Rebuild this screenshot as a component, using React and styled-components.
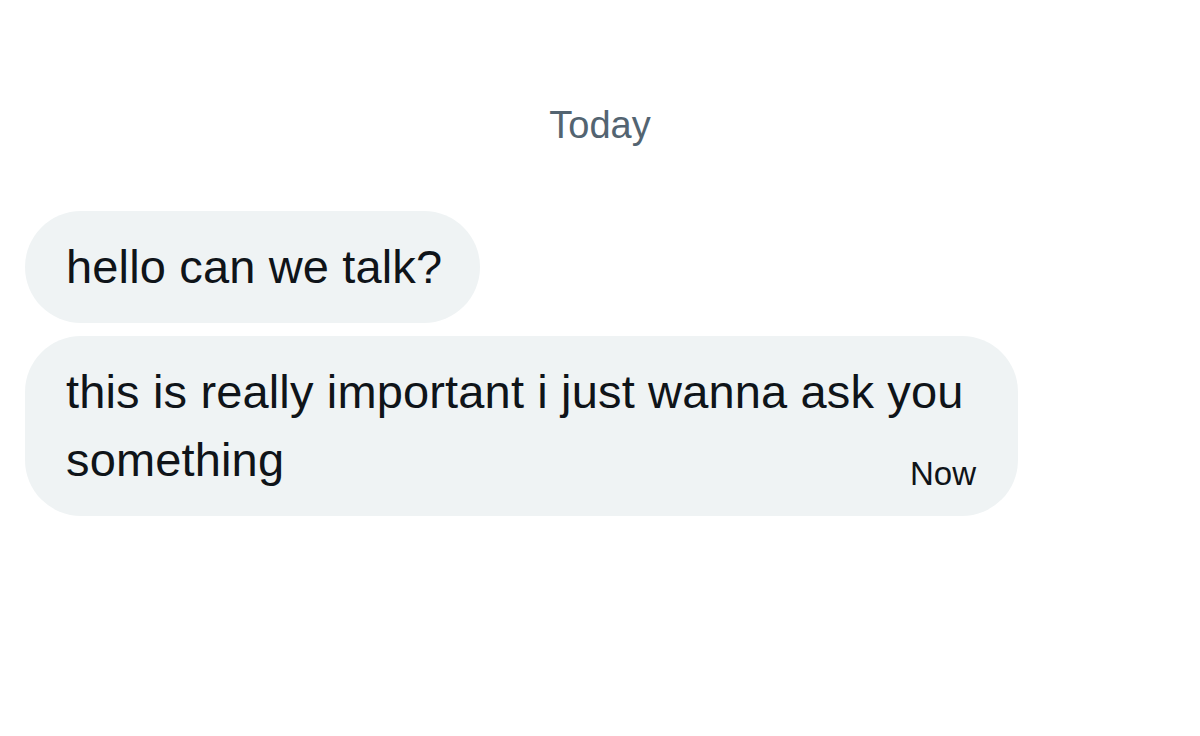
import React from "react";
import styled, { createGlobalStyle } from "styled-components";

const GlobalStyle = createGlobalStyle`
  html, body {
    margin: 0;
    padding: 0;
    background: #ffffff;
  }
  body {
    font-family: "Liberation Sans", Arial, sans-serif;
  }
`;

const Page = styled.div`
  width: 1200px;
  height: 736px;
  box-sizing: border-box;
  padding: 103px 25px 0 25px;
  display: flex;
  flex-direction: column;
  align-items: flex-start;
  background: #ffffff;
  overflow: hidden;
`;

const DayLabel = styled.div`
  align-self: center;
  font-size: 38px;
  line-height: 45.6px;
  color: #536471;
  margin-bottom: 62px;
`;

const Thread = styled.div`
  display: flex;
  flex-direction: column;
  align-items: flex-start;
  gap: 13px;
`;

const Bubble = styled.div`
  max-width: 993px;
  box-sizing: border-box;
  padding: 22px ${(p) => (p.$wide ? "50px" : "38px")} 22px 41px;
  background: #eff3f4;
  border-radius: 56px;
  font-size: 47px;
  line-height: 68px;
  color: #0f1419;
`;

const Text = styled.span`
  letter-spacing: 0.15px;
`;

const Time = styled.span`
  float: right;
  margin: 31px -8px 0 0;
  font-size: 33px;
  line-height: 33px;
`;

export default function App() {
  return (
    <>
      <GlobalStyle />
      <Page>
        <DayLabel>Today</DayLabel>
        <Thread>
          <Bubble>
            <Text>hello can we talk?</Text>
          </Bubble>
          <Bubble $wide>
            <Text>this is really important i just wanna ask you something</Text>
            <Time>Now</Time>
          </Bubble>
        </Thread>
      </Page>
    </>
  );
}
